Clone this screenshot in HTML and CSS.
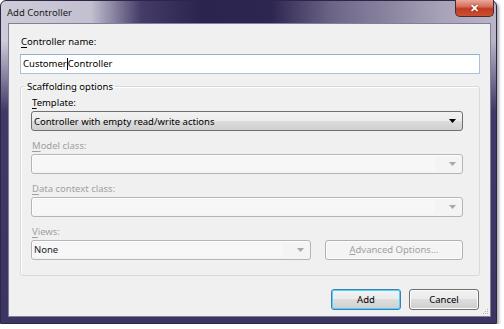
FILE: index.html
```html
<!DOCTYPE html>
<html lang="en">
<head>
    <meta charset="UTF-8">
    <title>Add Controller</title>
    <link rel="stylesheet" href="styles.css">
</head>
<body>
    <div class="window">
        <div class="titlebar">
            <span class="title">Add Controller</span>
            <div class="close-btn">&#x2715;</div>
        </div>

        <div class="client">
            <div class="label"><u>C</u>ontroller name:</div>
            <div class="textbox">Customer<span class="caret"></span>Controller</div>

            <fieldset class="group">
                <legend>Scaffolding options</legend>

                <div class="label"><u>T</u>emplate:</div>
                <div class="combo">
                    <span>Controller with empty read/write actions</span>
                    <svg class="arrow" width="7" height="4" viewBox="0 0 7 4"><path d="M0 0h7L3.5 4z"/></svg>
                </div>

                <div class="label disabled"><u>M</u>odel class:</div>
                <div class="combo combo-disabled">
                    <span class="combo-text"></span>
                    <svg class="arrow" width="7" height="4" viewBox="0 0 7 4"><path d="M0 0h7L3.5 4z"/></svg>
                </div>

                <div class="label disabled"><u>D</u>ata context class:</div>
                <div class="combo combo-disabled">
                    <span class="combo-text"></span>
                    <svg class="arrow" width="7" height="4" viewBox="0 0 7 4"><path d="M0 0h7L3.5 4z"/></svg>
                </div>

                <div class="label disabled"><u>V</u>iews:</div>
                <div class="views-row">
                    <div class="combo combo-disabled views">
                        <span class="combo-text">None</span>
                        <svg class="arrow" width="7" height="4" viewBox="0 0 7 4"><path d="M0 0h7L3.5 4z"/></svg>
                    </div>
                    <div class="button button-disabled"><u>A</u>dvanced Options...</div>
                </div>
            </fieldset>

            <div class="actions">
                <div class="button button-default">Add</div>
                <div class="button">Cancel</div>
            </div>

            <svg class="grip" width="6" height="6" viewBox="0 0 6 6">
                <rect x="4" y="0" width="1" height="1"/>
                <rect x="2" y="2" width="1" height="1"/>
                <rect x="4" y="2" width="1" height="1"/>
                <rect x="0" y="4" width="1" height="1"/>
                <rect x="2" y="4" width="1" height="1"/>
                <rect x="4" y="4" width="1" height="1"/>
            </svg>
        </div>
    </div>
</body>
</html>
```

FILE: styles.css
```css
body {
    margin: 0;
    background-color: #ffffff;
    font-family: "Noto Sans", "Open Sans", sans-serif;
    font-size: 9.5px;
    color: #000;
}
.window {
    width: 497px;
    height: 324px;
    box-sizing: border-box;
    padding: 0 5px 6px 7px;
    display: flex;
    flex-direction: column;
    border: 1px solid #2c2746;
    border-radius: 6px 6px 0 0;
    background:
        linear-gradient(to bottom, rgba(62, 57, 102, 0) 0, rgba(62, 57, 102, 0) 40px, #3e3966 110px, #3b3562 100%),
        linear-gradient(to right, #cfccd9 0, #c2bfd0 90px, #453c68 140px, #2b2350 200px, #2e2652 270px, #6c6486 330px, #a7a2b8 440px, #b9b5c6 100%);
    box-shadow: 2px 2px 3px rgba(0, 0, 0, 0.35);
}
.titlebar {
    height: 22px;
    flex-shrink: 0;
    display: flex;
    justify-content: space-between;
    align-items: center;
}
.title {
    color: #1a1a1a;
    margin-top: 1px;
    margin-left: -1px;
}
.close-btn {
    align-self: flex-start;
    width: 39px;
    height: 17px;
    margin-right: -3px;
    margin-top: -1px;
    box-sizing: border-box;
    border: 1px solid #4e2a2e;
    border-top: none;
    border-radius: 0 0 5px 5px;
    background: linear-gradient(to bottom, #e9a99b 0, #d6705c 40%, #c13a22 55%, #cd4f34 100%);
    color: #fff;
    font-size: 11px;
    font-weight: bold;
    text-align: center;
    line-height: 16px;
    text-shadow: 0 0 2px #6b1d12;
}
.client {
    position: relative;
    flex: 1;
    background-color: #f0f0f0;
    border: 1px solid #827e9c;
    padding: 10px 10px 0 11px;
}
.label {
    line-height: 16px;
    padding-left: 1px;
}
.label u {
    text-decoration-thickness: 1px;
    text-underline-offset: 2px;
}
.label.disabled {
    color: #a0a0a0;
    margin-top: 7px;
}
.textbox {
    margin-top: 4px;
    height: 20px;
    box-sizing: border-box;
    border: 1px solid #a9c2dc;
    border-top-color: #8fb0d0;
    background: #fff;
    line-height: 18px;
    padding-left: 2px;
}
.caret {
    display: inline-block;
    width: 1px;
    height: 12px;
    background: #000;
    vertical-align: -3px;
}
.group {
    margin: 5px 0 0 0;
    padding: 1px 16px 15px 10px;
    border: 1px solid #d5dade;
    border-radius: 3px;
    box-shadow: inset 1px 1px 0 #fff;
}
.group legend {
    margin-left: -6px;
    padding: 0 2px;
    line-height: 15px;
}
.combo {
    height: 20px;
    box-sizing: border-box;
    display: flex;
    align-items: center;
    justify-content: space-between;
    padding: 0 6px 0 2px;
    border: 1px solid #707070;
    border-radius: 3px;
    background: linear-gradient(to bottom, #f2f2f2 0, #ebebeb 50%, #dddddd 50%, #cfcfcf 100%);
}
.arrow {
    fill: #000;
}
.combo-disabled {
    border-color: #b5b5b5;
    background: #f4f4f4;
    box-shadow: inset 1px 1px 0 #fff;
    padding: 0 6px 0 0;
}
.combo-disabled .combo-text {
    flex: 1;
    align-self: stretch;
    margin: 2px 14px 2px 2px;
    background: #f7f7f7;
    line-height: 14px;
    color: #222;
}
.combo-disabled .arrow {
    fill: #a8a8a8;
}
.views-row {
    display: flex;
    gap: 14px;
}
.views {
    width: 280px;
}
.button {
    height: 21px;
    width: 70px;
    box-sizing: border-box;
    border: 1px solid #707070;
    border-radius: 3px;
    background: linear-gradient(to bottom, #f2f2f2 0, #ebebeb 50%, #dddddd 50%, #cfcfcf 100%);
    box-shadow: inset 0 0 0 1px #fcfcfc;
    text-align: center;
    line-height: 19px;
}
.button-disabled {
    flex: 1;
    height: 20px;
    line-height: 18px;
    border-color: #adb2b5;
    background: #f4f4f4;
    color: #a0a0a0;
}
.button-default {
    border-color: #3c7fb1;
    box-shadow: inset 0 0 0 1px #48d8fb;
}
.actions {
    display: flex;
    justify-content: flex-end;
    gap: 8px;
    margin-top: 13px;
    padding-right: 1px;
}
.grip {
    position: absolute;
    right: 1px;
    bottom: 1px;
    fill: #b8b8b8;
}
```
